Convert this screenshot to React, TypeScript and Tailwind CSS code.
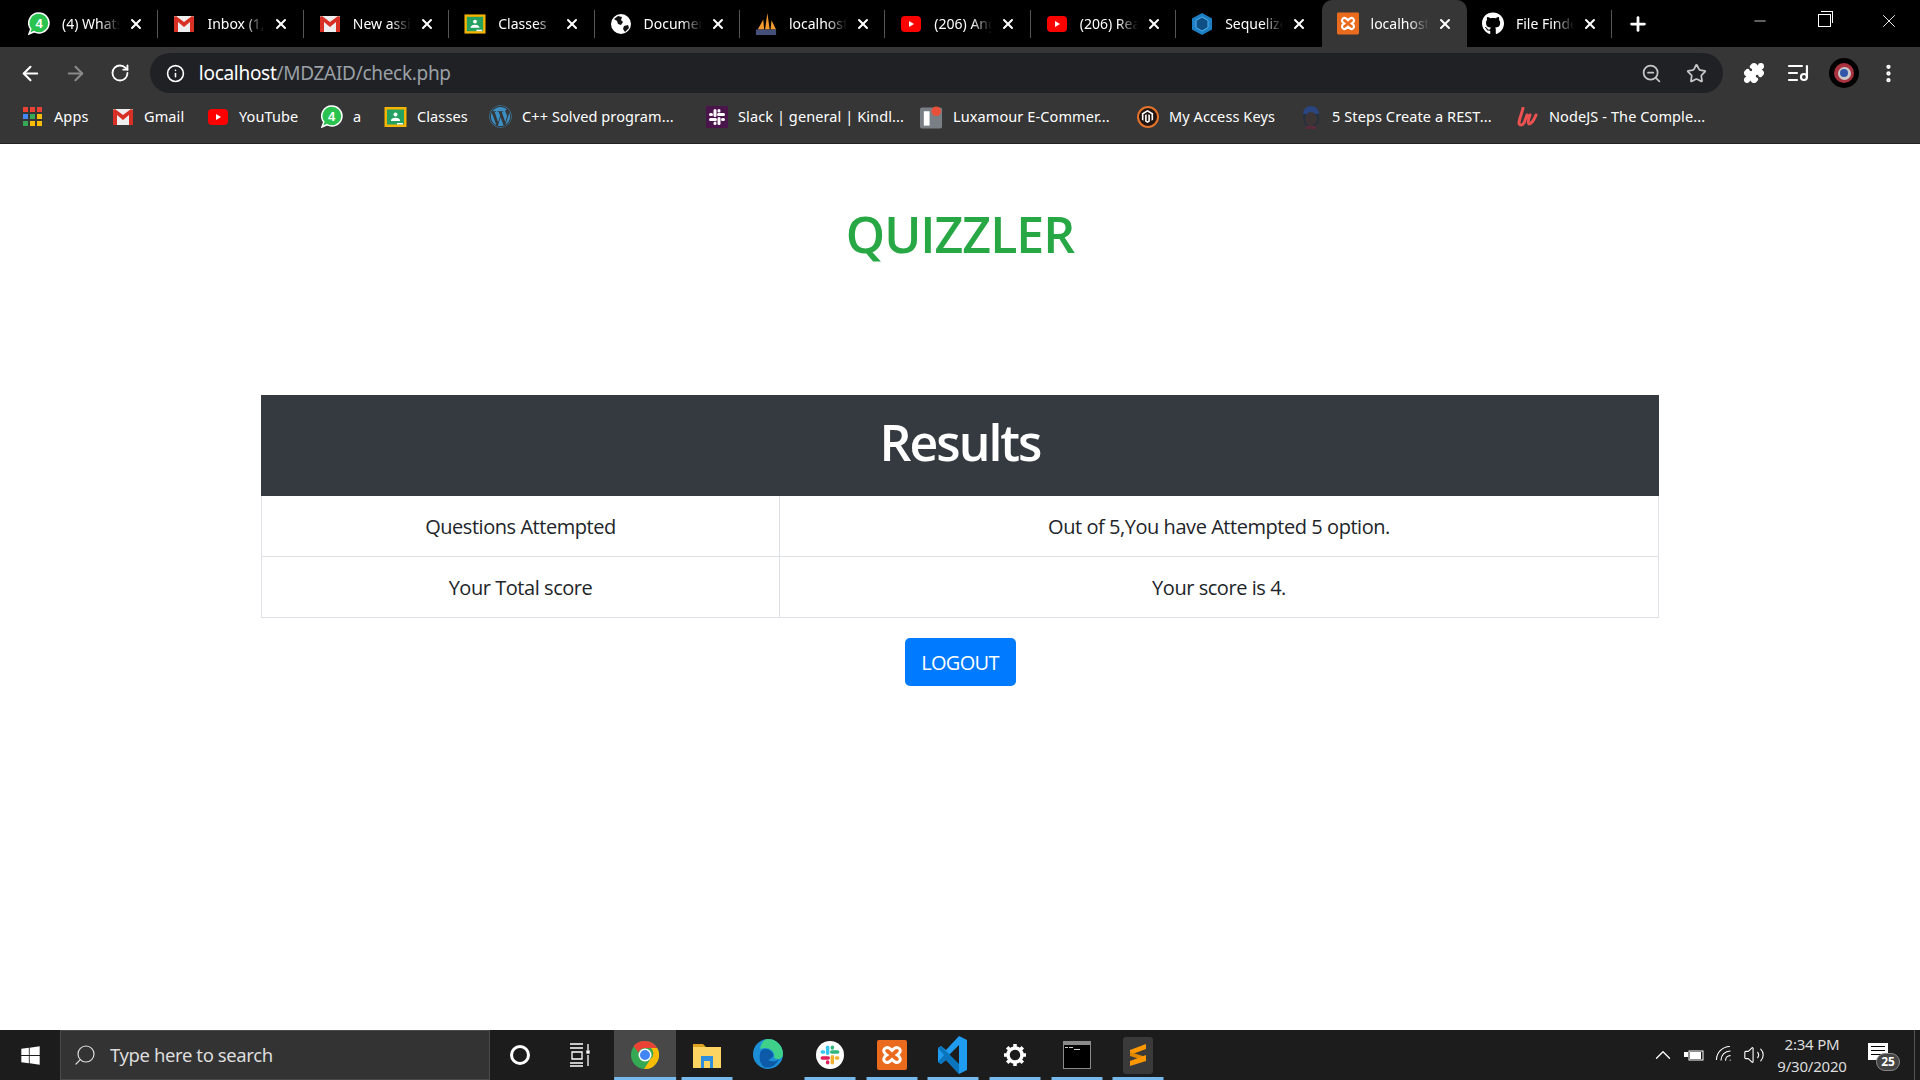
import React from 'react';
import { ArrowLeft, ArrowRight, RotateCw, Info, ZoomOut, Star, Puzzle, ListMusic, MoreVertical, X, Plus, Minus, Search, ChevronUp, Volume2, Wifi } from 'lucide-react';
import { FaGithub, FaWordpress, FaMagento, FaWindows } from 'react-icons/fa';

const WhatsApp = () => (
  <span className="relative flex w-[22px] h-[23px] items-center justify-center">
    <svg width="22" height="23" viewBox="0 0 22 23" className="absolute inset-0">
      <path d="M11 1a10 10 0 0 1 0 20 10 10 0 0 1-5-1.300L1 22l1.800-5A10 10 0 0 1 11 1z" fill="#2bc34f" stroke="#fff" strokeWidth="1.500" />
    </svg>
    <span className="relative text-white text-[13px] font-bold font-['Liberation_Sans']">4</span>
  </span>
);

const Gmail = () => (
  <svg width="22" height="18" viewBox="0 0 22 18">
    <rect x="1" y="1" width="20" height="16" fill="#eee" rx="1" />
    <path d="M1 2v15h4V7l6 5 6-5v10h4V2l-2-1-8 6-8-6z" fill="#d93025" />
  </svg>
);

const YouTube = () => (
  <svg width="22" height="18" viewBox="0 0 22 18">
    <rect x="1" y="1" width="20" height="16" rx="4" fill="#f00" />
    <path d="M9 6l5 3-5 3z" fill="#fff" />
  </svg>
);

const Classroom = () => (
  <svg width="23" height="22" viewBox="0 0 23 22">
    <rect x="0.5" y="1" width="22" height="20" fill="#f4b400" />
    <rect x="3" y="3.5" width="17" height="15" fill="#25a162" />
    <circle cx="11.5" cy="8.5" r="2" fill="#fff" />
    <path d="M7 14c1-3 8-3 9 0v1H7z" fill="#fff" />
    <rect x="13" y="17" width="6" height="1.5" fill="#fff" />
  </svg>
);

const Globe = () => (
  <svg width="22" height="22" viewBox="0 0 22 22">
    <circle cx="11" cy="11" r="10" fill="#fff" />
    <path d="M4 6l4-3 4 1-1 3 2 2-2 3-3-1-1-3zM14 13l4-1 1 3-4 4-2-3z" fill="#111" />
  </svg>
);

const Pma = () => (
  <svg width="24" height="26" viewBox="0 0 24 26">
    <path d="M3 19L9 8l1 11zM11 19l2.500-18L16 19zM17 19l1-10 5 10z" fill="#f29a2e" />
    <rect x="1" y="19" width="22" height="6" fill="#45507a" />
  </svg>
);

const Sequelize = () => (
  <svg width="22" height="24" viewBox="0 0 22 24">
    <path d="M11 1l10 5.500v11L11 23 1 17.500v-11z" fill="#1f7fc4" />
    <path d="M11 5l6 3.500v7L11 19l-6-3.500v-7z" fill="#0e4f86" stroke="#4fb3f0" strokeWidth="1" />
  </svg>
);

const Xampp = ({ size = 23 }: { size?: number }) => (
  <svg width={size} height={size} viewBox="0 0 23 23">
    <rect width="23" height="23" rx="1.500" fill="#ea6b1e" />
    <path d="M6 6.500c2-2 4 0 5.500 1.500C13 6.500 15 4.500 17 6.500s0 4-1.500 5C17 12.500 19 14.500 17 16.500s-4 0-5.500-1.500C10 16.500 8 18.500 6 16.500s0-4 1.500-5C6 10.500 4 8.500 6 6.500z" fill="none" stroke="#fff" strokeWidth="2.200" />
  </svg>
);

const AppsGrid = () => (
  <span className="grid grid-cols-3 gap-[2px]">
    {['bg-[#ea4335]', 'bg-[#ea4335]', 'bg-[#ea4335]', 'bg-[#4285f4]', 'bg-[#34a853]', 'bg-[#fbbc05]', 'bg-[#34a853]', 'bg-[#fbbc05]', 'bg-[#fbbc05]'].map((c, i) => (
      <span key={i} className={`w-[5px] h-[5px] ${c}`}></span>
    ))}
  </span>
);

const SlackMark = ({ size = 22, box = true }: { size?: number; box?: boolean }) => (
  <svg width={size} height={size} viewBox="0 0 22 22">
    {box && <rect width="22" height="22" fill="#4a154b" />}
    <rect x="7.500" y="3" width="3" height="8" rx="1.500" fill={box ? '#fff' : '#36c5f0'} />
    <rect x="11" y="7" width="8" height="3" rx="1.500" fill={box ? '#fff' : '#2eb67d'} />
    <rect x="11.500" y="11" width="3" height="8" rx="1.500" fill={box ? '#fff' : '#ecb22e'} />
    <rect x="3" y="12" width="8" height="3" rx="1.500" fill={box ? '#fff' : '#e01e5a'} />
    <rect x="3" y="7" width="4" height="3" rx="1.500" fill={box ? '#fff' : '#36c5f0'} />
    <rect x="11.500" y="3" width="3" height="3.500" rx="1.500" fill={box ? '#fff' : '#2eb67d'} />
    <rect x="15" y="12" width="4" height="3" rx="1.500" fill={box ? '#fff' : '#ecb22e'} />
    <rect x="7.500" y="15.500" width="3" height="3.500" rx="1.500" fill={box ? '#fff' : '#e01e5a'} />
  </svg>
);

const Luxamour = () => (
  <svg width="24" height="24" viewBox="0 0 24 24">
    <rect y="2" width="23" height="22" rx="2" fill="#7a7f85" />
    <rect x="4" y="6" width="6" height="15" fill="#fff" />
    <circle cx="17" cy="6" r="5" fill="#e8503a" />
  </svg>
);

const Face = () => (
  <svg width="20" height="24" viewBox="0 0 20 24">
    <ellipse cx="10" cy="12" rx="8" ry="11" fill="#23303f" />
    <path d="M2 9a8 8 0 0 1 16 0z" fill="#2a4580" />
    <ellipse cx="10" cy="14" rx="6" ry="7" fill="#3d3535" />
    <path d="M5 21h10v3H5z" fill="#5a2a3a" />
  </svg>
);

const Udemy = () => (
  <svg width="22" height="20" viewBox="0 0 22 20">
    <path d="M6 1C5 6 2 13 2 16c0 2 3 3 5 0l3-8M13 8c-1 3-3 8-1 9 2 0 5-4 7-9" fill="none" stroke="#ec5252" strokeWidth="3" strokeLinecap="round" />
  </svg>
);

const tabs = [
  { icon: <WhatsApp />, title: '(4) WhatsApp' },
  { icon: <Gmail />, title: 'Inbox (1,204)' },
  { icon: <Gmail />, title: 'New assignment' },
  { icon: <Classroom />, title: 'Classes' },
  { icon: <Globe />, title: 'Document' },
  { icon: <Pma />, title: 'localhost' },
  { icon: <YouTube />, title: '(206) Angular' },
  { icon: <YouTube />, title: '(206) React' },
  { icon: <Sequelize />, title: 'Sequelize' },
  { icon: <Xampp />, title: 'localhost', active: true },
  { icon: <FaGithub size={23} color="#fff" />, title: 'File Finder' },
];

const bookmarks = [
  { icon: <AppsGrid />, label: 'Apps', w: 'w-[90px]' },
  { icon: <Gmail />, label: 'Gmail', w: 'w-[95px]' },
  { icon: <YouTube />, label: 'YouTube', w: 'w-[114px]' },
  { icon: <WhatsApp />, label: 'a', w: 'w-[64px]' },
  { icon: <Classroom />, label: 'Classes', w: 'w-[105px]' },
  { icon: <FaWordpress size={23} color="#3b8fc4" />, label: 'C++ Solved program...', w: 'w-[216px]' },
  { icon: <SlackMark />, label: 'Slack | general | Kindl...', w: 'w-[215px]' },
  { icon: <Luxamour />, label: 'Luxamour E-Commer...', w: 'w-[216px]' },
  { icon: <span className="flex w-[22px] h-[22px] items-center justify-center rounded-full bg-[#221512] border-2 border-[#e2722c]"><FaMagento size={13} color="#fff" /></span>, label: 'My Access Keys', w: 'w-[163px]' },
  { icon: <Face />, label: '5 Steps Create a REST...', w: 'w-[217px]' },
  { icon: <Udemy />, label: 'NodeJS - The Comple...', w: 'w-[200px]' },
];

const Chrome = () => (
  <svg width="28" height="28" viewBox="0 0 28 28">
    <circle cx="14" cy="14" r="14" fill="#34a853" />
    <path d="M14 0a14 14 0 0 1 12.100 7H14a7 7 0 0 0-6.500 4.500L2.500 5A14 14 0 0 1 14 0z" fill="#ea4335" />
    <path d="M26.100 7A14 14 0 0 1 13 28l6.500-10a7 7 0 0 0 .5-11z" fill="#fbbc05" />
    <circle cx="14" cy="14" r="6.500" fill="#fff" />
    <circle cx="14" cy="14" r="5" fill="#4285f4" />
  </svg>
);

const Explorer = () => (
  <svg width="28" height="26" viewBox="0 0 28 26">
    <path d="M0 2h10l3 3h-13z" fill="#e0a020" />
    <rect y="5" width="28" height="21" fill="#fcd462" />
    <path d="M8 14h12v12h-3v-7h-6v7H8z" fill="#2f8fdc" />
  </svg>
);

const Edge = () => (
  <svg width="30" height="34" viewBox="0 0 30 34">
    <circle cx="15" cy="16" r="15" fill="#1b8ed6" />
    <path d="M15 1a15 15 0 0 1 15 15c0 5-5 6-9 4 2-7-6-12-14-9 1-6 4-10 8-10z" fill="#3fd08a" />
    <path d="M7 16c0-6 10-7 13 0 1 3-3 5-5 6 4 2 8 2 11-1-3 7-10 10-15 8-4-3-5-8-4-13z" fill="#0c5aa8" />
  </svg>
);

const VsCode = () => (
  <svg width="30" height="38" viewBox="0 0 30 38">
    <path d="M21 0l8 4v30l-8 4-13-14-5 4-3-2V12l3-2 5 4z" fill="#1f9cf0" />
    <path d="M21 9L11 19l10 10z" fill="#1c1c1c" />
    <path d="M0 12l3-2 18 18v10L8 24l-5 4-3-2 6-7z" fill="#0a75bd" />
  </svg>
);

const Gear = () => (
  <svg width="24" height="24" viewBox="0 0 24 24" fill="none">
    <circle cx="12" cy="12" r="7" stroke="#fff" strokeWidth="3.500" />
    <path d="M12 1v5M12 18v5M1 12h5M18 12h5M4.200 4.200l3.500 3.500M16.300 16.300l3.500 3.500M19.800 4.200l-3.500 3.500M7.700 16.300l-3.500 3.500" stroke="#fff" strokeWidth="3.500" />
  </svg>
);

const TerminalIcon = () => (
  <svg width="28" height="28" viewBox="0 0 28 28">
    <rect width="28" height="28" fill="#8a8a8a" />
    <rect x="1" y="4" width="26" height="23" fill="#000" />
    <rect x="2" y="6" width="3" height="1" fill="#ccc" />
    <rect x="6" y="6" width="4" height="1" fill="#ccc" />
    <rect x="11" y="8" width="6" height="1" fill="#ccc" />
  </svg>
);

const Sublime = () => (
  <span className="flex w-[30px] h-[37px] items-center justify-center rounded-[3px] bg-[#3a3a3a]">
    <svg width="18" height="24" viewBox="0 0 18 24">
      <path d="M1 7l16-6v5L1 12z" fill="#ff9800" />
      <path d="M1 9l16 5v4L1 13z" fill="#e08600" />
      <path d="M1 18l16-6v6L1 23z" fill="#ff9800" />
    </svg>
  </span>
);

const taskApps = [
  { icon: <Chrome />, active: true, bar: 'w-full' },
  { icon: <Explorer />, bar: 'w-[51px]' },
  { icon: <Edge /> },
  { icon: <span className="flex w-[28px] h-[28px] items-center justify-center rounded-full bg-white"><SlackMark size={26} box={false} /></span>, bar: 'w-[51px]' },
  { icon: <Xampp size={30} />, bar: 'w-[51px]' },
  { icon: <VsCode />, bar: 'w-[51px]' },
  { icon: <Gear />, bar: 'w-[51px]' },
  { icon: <TerminalIcon />, bar: 'w-[51px]' },
  { icon: <Sublime />, bar: 'w-[51px]' },
];

export default function App() {
  return (
    <div className="h-screen w-full flex flex-col overflow-hidden bg-white font-['Open_Sans',sans-serif]">
      {/* Tab strip */}
      <div className="h-[47px] flex items-stretch bg-black pl-[13px] shrink-0 text-white">
        {tabs.map((tab, i) => (
          <div
            key={i}
            className={`relative w-[145.400px] shrink-0 flex items-center pl-[15px] pr-[14px] ${tab.active ? 'bg-[#363636] rounded-t-[10px]' : ''}`}
          >
            <span className="w-[22px] h-[24px] flex items-center justify-center shrink-0">{tab.icon}</span>
            <span className="ml-[12px] w-[58px] overflow-hidden whitespace-nowrap text-[14px] font-['Noto_Sans',sans-serif] [mask-image:linear-gradient(to_right,black_65%,transparent)]">
              {tab.title}
            </span>
            <X size={16} strokeWidth={3} className="ml-[8px] shrink-0" />
            {!tab.active && i !== 8 && <span className="absolute right-0 top-[10px] h-[28px] w-[1px] bg-[#555]"></span>}
          </div>
        ))}
        <div className="ml-[15px] flex items-center">
          <Plus size={22} strokeWidth={3} />
        </div>
        <div className="ml-auto flex items-center pb-[6px]">
          <span className="w-[64px] flex justify-center"><Minus size={18} strokeWidth={1} /></span>
          <span className="w-[64px] flex justify-center mr-[2px]">
            <span className="relative block w-[13px] h-[13px] border border-white">
              <span className="absolute -top-[4px] left-[2px] w-[12px] h-[12px] border-t border-r border-white"></span>
            </span>
          </span>
          <span className="w-[62px] flex justify-center"><X size={22} strokeWidth={1} /></span>
        </div>
      </div>

      {/* Toolbar */}
      <div className="h-[52px] flex items-center bg-[#363636] text-white shrink-0 pl-[19px] pr-[20px]">
        <ArrowLeft size={23} strokeWidth={2.200} />
        <ArrowRight size={23} strokeWidth={2.200} className="ml-[22px] text-[#8a8a8a]" />
        <RotateCw size={20} strokeWidth={2.200} className="ml-[23px]" />
        <div className="ml-[20px] w-[1577px] h-[40px] rounded-full bg-[#202124] flex items-center pl-[16px] pr-[16px]">
          <Info size={19} strokeWidth={2} />
          <span className="ml-[14px] text-[19px] font-['Noto_Sans',sans-serif] tracking-[-0.3px]">
            localhost<span className="text-[#9aa0a6]">/MDZAID/check.php</span>
          </span>
          <ZoomOut size={21} strokeWidth={2} className="ml-auto text-[#c4c7c5]" />
          <Star size={21} strokeWidth={2} className="ml-[24px] text-[#c4c7c5]" />
        </div>
        <Puzzle size={22} strokeWidth={2} fill="#fff" className="ml-[20px]" />
        <ListMusic size={24} strokeWidth={2.200} className="ml-[21px]" />
        <span className="ml-[19px] flex w-[30px] h-[30px] items-center justify-center rounded-full bg-black">
          <span className="flex w-[20px] h-[20px] items-center justify-center rounded-full bg-[#a8333f]">
            <span className="flex w-[13px] h-[13px] items-center justify-center rounded-full bg-[#c9c9c9]">
              <span className="block w-[8px] h-[8px] rounded-full bg-[#3157a8]"></span>
            </span>
          </span>
        </span>
        <MoreVertical size={23} strokeWidth={2.500} className="ml-[18px]" />
      </div>

      {/* Bookmarks bar */}
      <div className="h-[45px] flex items-center bg-[#363636] border-b border-[#222] text-white shrink-0 pl-[21px] pb-[9px]">
        {bookmarks.map((b, i) => (
          <div key={i} className={`${b.w} shrink-0 flex items-center`}>
            <span className="w-[23px] h-[24px] flex items-center justify-center shrink-0">{b.icon}</span>
            <span className="ml-[10px] whitespace-nowrap text-[14.500px] font-['Noto_Sans',sans-serif] tracking-[0.1px]">{b.label}</span>
          </div>
        ))}
      </div>

      {/* Page */}
      <main className="flex-1 flex flex-col items-center bg-white">
        <h1 className="mt-[60px] text-[50px] leading-[60px] font-semibold text-[#28a745] tracking-[-1px]">QUIZZLER</h1>
        <table className="mt-[131px] w-[1398px] border-collapse table-fixed text-[#212529] text-[20px] tracking-[-0.450px] text-center">
          <colgroup>
            <col className="w-[518px]" />
            <col />
          </colgroup>
          <thead>
            <tr>
              <th colSpan={2} className="h-[100px] bg-[#343a40] border border-[#343a40] text-white text-[50px] font-semibold tracking-[-2px] pb-[6px]">Results</th>
            </tr>
          </thead>
          <tbody>
            <tr className="h-[61px]">
              <td className="border border-[#dee2e6] pt-[2px]">Questions Attempted</td>
              <td className="border border-[#dee2e6] pt-[2px]">Out of 5,You have Attempted 5 option.</td>
            </tr>
            <tr className="h-[61px]">
              <td className="border border-[#dee2e6] pt-[2px]">Your Total score</td>
              <td className="border border-[#dee2e6] pt-[2px]">Your score is 4.</td>
            </tr>
          </tbody>
        </table>
        <button className="mt-[20px] w-[111px] h-[48px] pt-[1px] rounded-[5px] bg-[#007bff] text-white text-[20px] tracking-[-0.700px]">LOGOUT</button>
      </main>

      {/* Windows taskbar */}
      <div className="h-[50px] flex items-stretch bg-[#1c1c1c] text-white shrink-0">
        <div className="w-[60px] flex items-center justify-center"><FaWindows size={21} /></div>
        <div className="w-[430px] flex items-center bg-[#333] border border-[#4a4a4a] pl-[12px]">
          <Search size={24} strokeWidth={1.200} className="-scale-x-100 text-[#ddd]" />
          <span className="ml-[13px] text-[18.500px] text-[#ddd] font-['Noto_Sans',sans-serif] tracking-[-0.400px]">Type here to search</span>
        </div>
        <div className="w-[60px] flex items-center justify-center">
          <span className="block w-[20px] h-[20px] rounded-full border-[3px] border-white"></span>
        </div>
        <div className="w-[64px] flex items-center justify-center pr-[4px]">
          <svg width="22" height="24" viewBox="0 0 22 24" fill="none" stroke="#fff" strokeWidth="1.300">
            <path d="M1 1h13M1 5h13M3 9h10v7H3zM1 20h13M1 23h13M19 1v6M19 12v11" />
            <rect x="18" y="8" width="2" height="2" fill="#fff" />
          </svg>
        </div>
        {taskApps.map((app, i) => (
          <div key={i} className={`relative w-[61.700px] flex items-center justify-center ${app.active ? 'bg-[#484848]' : ''}`}>
            {app.icon}
            {app.bar && <span className={`absolute bottom-0 left-1/2 -translate-x-1/2 h-[3px] bg-[#76b9ed] ${app.bar}`}></span>}
          </div>
        ))}
        <div className="ml-auto flex items-center">
          <ChevronUp size={26} strokeWidth={1.200} />
          <svg width="20" height="12" viewBox="0 0 20 12" className="ml-[8px]">
            <rect x="5" y="2" width="14" height="9" fill="none" stroke="#fff" />
            <rect x="6" y="3" width="11" height="7" fill="#fff" />
            <rect x="0" y="3" width="4" height="5" fill="#fff" />
          </svg>
          <Wifi size={22} strokeWidth={1.200} className="ml-[10px] -rotate-45" />
          <Volume2 size={22} strokeWidth={1.200} className="ml-[7px]" />
          <div className="ml-[3px] w-[88px] flex flex-col items-center text-[15px] leading-[22px] text-[#ddd] font-['Noto_Sans',sans-serif] tracking-[-0.2px]">
            <span>2:34 PM</span>
            <span>9/30/2020</span>
          </div>
          <div className="relative ml-[12px] w-[36px] h-[40px]">
            <span className="absolute left-0 top-[8px] flex flex-col gap-[3px] w-[20px] h-[17px] bg-white p-[3px]">
              <span className="block h-[1px] bg-black"></span>
              <span className="block h-[1px] bg-black"></span>
              <span className="block h-[1px] bg-black"></span>
            </span>
            <span className="absolute left-[8px] top-[18px] flex w-[24px] h-[18px] items-center justify-center rounded-full bg-[#444] border border-[#888] text-[12px] font-bold">25</span>
          </div>
          <span className="ml-[10px] w-[6px] h-full border-l border-[#555]"></span>
        </div>
      </div>
    </div>
  );
}
